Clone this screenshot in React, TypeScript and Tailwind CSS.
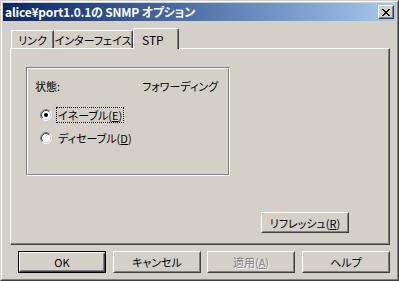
import React from "react"

// Windows 2000 クラシック風のダイアログ
const Raised = ({ children, className = "" }: { children: React.ReactNode; className?: string }) => (
  <div className={`border border-t-white border-l-white border-r-[#404040] border-b-[#404040] ${className}`}>
    <div className="w-full h-full border border-t-[#d4d0c8] border-l-[#d4d0c8] border-r-[#808080] border-b-[#808080] flex items-center justify-center">
      {children}
    </div>
  </div>
)

function Button({ children, isDefault, className = "" }: { children: React.ReactNode; isDefault?: boolean; className?: string }) {
  if (isDefault) {
    return (
      <div className={`border border-black ${className}`}>
        <Raised className="w-full h-full">{children}</Raised>
      </div>
    )
  }
  return <Raised className={className}>{children}</Raised>
}

function Radio({ checked }: { checked?: boolean }) {
  return (
    <svg width="12" height="12" viewBox="0 0 12 12" className="shrink-0">
      <circle cx="6" cy="6" r="5" fill="#fff" />
      <path d="M2.1 9.9 A5.5 5.5 0 0 1 9.9 2.1" fill="none" stroke="#808080" strokeWidth="1" />
      <path d="M2.8 9.2 A4.5 4.5 0 0 1 9.2 2.8" fill="none" stroke="#404040" strokeWidth="1" />
      <path d="M9.9 2.1 A5.5 5.5 0 0 1 2.1 9.9" fill="none" stroke="#ffffff" strokeWidth="1" />
      <path d="M9.2 2.8 A4.5 4.5 0 0 1 2.8 9.2" fill="none" stroke="#d4d0c8" strokeWidth="1" />
      {checked && <circle cx="6" cy="6" r="2" fill="#000" />}
    </svg>
  )
}

export default function App() {
  return (
    <div className="w-[399px] h-[281px] bg-[#d4d0c8] border border-t-[#d4d0c8] border-l-[#d4d0c8] border-r-[#404040] border-b-[#404040] text-[11px] leading-[16px] text-black whitespace-nowrap [font-family:'Noto_Sans_CJK_JP',sans-serif] [font-feature-settings:'palt']">
      <div className="h-full border border-t-white border-l-white border-r-[#808080] border-b-[#808080] p-px flex flex-col">
        {/* タイトルバー */}
        <div className="h-[18px] shrink-0 flex items-center justify-between pl-[2px] pr-[2px] bg-linear-to-r from-[#0a246a] to-[#a6caf0]">
          <span className="text-white font-bold text-[12px] leading-[18px] tracking-[-0.2px]">alice¥port1.0.1の SNMP オプション</span>
          <Raised className="w-[16px] h-[14px] bg-[#d4d0c8]">
            <svg width="8" height="7" viewBox="0 0 8 7" shapeRendering="crispEdges">
              <path d="M0 0h2v1h1v1h2v-1h1v-1h2v1h-1v1h-1v1h-1v1h1v1h1v1h1v1h-2v-1h-1v-1h-2v1h-1v1h-2v-1h1v-1h1v-1h1v-1h-1v-1h-1v-1h-1z" fill="#000" />
            </svg>
          </Raised>
        </div>

        {/* タブ */}
        <div className="mt-[7px] ml-[7px] w-[380px] shrink-0">
          <div className="h-[20px] flex items-end relative z-10">
            <div className="ml-[1px] w-[43px] h-[18px] flex items-center justify-center border-t border-l border-t-white border-l-white border-r border-r-[#404040] shadow-[inset_-1px_0_#808080] rounded-t-[2px]">
              リンク
            </div>
            <div className="w-[79px] h-[18px] flex items-center justify-center border-t border-t-white border-r border-r-[#404040] shadow-[inset_-1px_0_#808080] rounded-t-[2px]">
              インターフェイス
            </div>
            <div className="w-[46px] h-[21px] -mb-px bg-[#d4d0c8] flex items-start pl-[8px] pt-[3px] text-[12px] border-t border-l border-t-white border-l-white border-r border-r-[#404040] shadow-[inset_-1px_0_#808080] rounded-t-[2px]">
              STP
            </div>
          </div>

          {/* パネル */}
          <div className="h-[197px] border border-t-white border-l-white border-r-[#404040] border-b-[#404040] shadow-[inset_-1px_-1px_#808080] pl-[15px] pt-[18px] flex flex-col">
            <div className="w-[204px] h-[109px] border border-t-[#808080] border-l-[#808080] border-r-white border-b-white">
              <div className="h-full border border-t-white border-l-white border-r-[#808080] border-b-[#808080] pl-[7px] pt-[9px] flex flex-col">
                <div className="h-[16px] flex items-center">
                  <span className="w-[107px]">状態:</span>
                  <span>フォワーディング</span>
                </div>
                <div className="h-[16px] mt-[13px] pl-[5px] flex items-center">
                  <Radio checked />
                  <span className="ml-[4px] border border-dotted border-black px-px leading-[14px]">
                    イネーブル(<span className="underline underline-offset-1">E</span>)
                  </span>
                </div>
                <div className="h-[16px] mt-[7px] pl-[5px] flex items-center">
                  <Radio />
                  <span className="ml-[5px] px-px">
                    ディセーブル(<span className="underline underline-offset-1">D</span>)
                  </span>
                </div>
              </div>
            </div>
            <Button className="mt-[36px] ml-[235px] w-[88px] h-[21px]">
              リフレッシュ(<span className="underline underline-offset-1">R</span>)
            </Button>
          </div>
        </div>

        {/* 下部ボタン */}
        <div className="mt-[6px] ml-[15px] flex shrink-0">
          <Button isDefault className="w-[88px] h-[22px]">OK</Button>
          <Button className="ml-[7px] w-[88px] h-[22px]">キャンセル</Button>
          <Button className="ml-[6px] w-[88px] h-[22px]">
            <span className="text-[#808080] [text-shadow:1px_1px_0_#fff]">
              適用(<span className="underline underline-offset-1">A</span>)
            </span>
          </Button>
          <Button className="ml-[7px] w-[88px] h-[22px]">ヘルプ</Button>
        </div>
      </div>
    </div>
  )
}
